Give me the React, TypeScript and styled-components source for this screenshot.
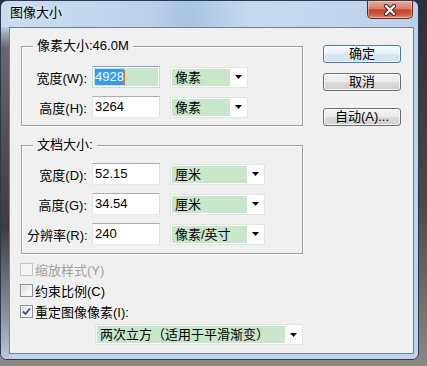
import styled, { createGlobalStyle } from "styled-components";

const GlobalStyle = createGlobalStyle`
  html, body {
    margin: 0;
    padding: 0;
  }
  body {
    width: 427px;
    height: 366px;
    overflow: hidden;
    background: linear-gradient(180deg, #2b3038 0%, #4b4846 55%, #8c8884 100%);
    font-family: "Liberation Sans", "Noto Sans CJK SC", sans-serif;
    font-size: 13px;
    color: #000;
  }
`;

const Window = styled.div`
  width: 419px;
  height: 360px;
  box-sizing: border-box;
  border: 1px solid #2c3a4c;
  border-radius: 7px;
  overflow: hidden;
  display: flex;
  flex-direction: column;
  background: linear-gradient(
    90deg,
    #cbdcef 0%,
    #bcd2ea 35%,
    #a8c3e1 45%,
    #c6daee 60%,
    #bad1ea 100%
  );
`;

const TitleBar = styled.div`
  height: 26px;
  display: flex;
  align-items: flex-start;
  padding: 0 5px 0 9px;
`;

const Title = styled.div`
  flex: 1;
  margin-top: 4px;
  line-height: 16px;
  text-shadow: 0 0 6px rgba(255, 255, 255, 0.9);
`;

const CloseButton = styled.div`
  width: 46px;
  height: 18px;
  box-sizing: border-box;
  border: 1px solid #6e2519;
  border-top: none;
  border-radius: 0 0 5px 5px;
  background: linear-gradient(
    #eaa99b 0%,
    #d9806d 45%,
    #c3442c 52%,
    #cd5b41 80%,
    #e48c70 100%
  );
  box-shadow: inset 0 0 0 1px rgba(255, 255, 255, 0.35);
  display: flex;
  align-items: center;
  justify-content: center;
`;

const Frame = styled.div`
  flex: 1;
  display: flex;
  padding: 0 4px 5px 8px;
  background: linear-gradient(
        180deg,
        #b9cde3 0px,
        #6a6670 20px,
        #3e3a3d 60%,
        #8d96a3 88%,
        #b8c8da 100%
      )
      left / 8px 100% no-repeat,
    #bfd3e8;
`;

const Client = styled.div`
  flex: 1;
  border: 1px solid #6d8297;
  background: #f0f0f0;
  display: grid;
  grid-template-columns: 282px 78px;
  column-gap: 20px;
  align-content: start;
  padding: 10px 0 0 11px;
`;

const LeftCol = styled.div`
  display: flex;
  flex-direction: column;
`;

const GroupBox = styled.fieldset<{ $top: number; $bottom: number; $gap?: number }>`
  margin: ${(p) => p.$gap ?? 0}px 0 0 0;
  padding: ${(p) => p.$top}px 0 ${(p) => p.$bottom}px 5px;
  border: 1px solid #a0a0a0;
  box-shadow: 1px 1px 0 #fff, inset 1px 1px 0 #fff;
  min-width: 0;
`;

const Legend = styled.legend`
  margin-left: 6px;
  padding: 0 4px;
  line-height: 16px;
  background: #f0f0f0;
`;

const Row = styled.div`
  display: flex;
  align-items: center;
  height: 22px;
  & + & {
    margin-top: 8px;
  }
`;

const Label = styled.span`
  width: 60px;
  margin-right: 5px;
  text-align: right;
  white-space: nowrap;
`;

const Field = styled.div<{ $active?: boolean }>`
  width: 68px;
  height: 22px;
  box-sizing: border-box;
  border: 1px solid;
  border-color: ${(p) =>
    p.$active ? "#7da2ce #c5daed #c5daed #c5daed" : "#abadb3 #dbdfe6 #e3e9ef #e2e3ea"};
  background: #fff;
  padding: 1px;
  display: flex;
`;

const FieldInner = styled.div<{ $active?: boolean }>`
  flex: 1;
  display: flex;
  align-items: center;
  padding-left: 1px;
  background: ${(p) => (p.$active ? "#c8e6c9" : "#fff")};
  line-height: 16px;
`;

const Selection = styled.span`
  background: #3399ff;
  color: #fff;
`;

const Caret = styled.span`
  width: 1px;
  height: 15px;
  background: #c77a2a;
`;

const Select = styled.div<{ $w: number; $indent?: number }>`
  width: ${(p) => p.$w}px;
  height: 21px;
  box-sizing: border-box;
  margin-left: ${(p) => p.$indent ?? 10}px;
  border: 1px solid #e4e4e4;
  background: #fff;
  padding: 1px;
  display: flex;
`;

const SelectText = styled.div`
  flex: 1;
  background: #c8e6c9;
  padding-left: 3px;
  line-height: 17px;
  white-space: nowrap;
  overflow: hidden;
`;

const Arrow = styled.div`
  width: 16px;
  display: flex;
  align-items: center;
  justify-content: center;
`;

const CheckList = styled.div`
  margin-top: 5px;
  display: flex;
  flex-direction: column;
`;

const CheckRow = styled.div<{ $disabled?: boolean }>`
  height: 21px;
  margin-left: -1px;
  display: flex;
  align-items: center;
  color: ${(p) => (p.$disabled ? "#a0a0a0" : "#000")};
`;

const Box = styled.span<{ $disabled?: boolean }>`
  width: 13px;
  height: 13px;
  box-sizing: border-box;
  margin-right: 2px;
  border: 1px solid ${(p) => (p.$disabled ? "#c6c6c6" : "#8e8f8f")};
  background: ${(p) =>
    p.$disabled ? "#f4f4f4" : "linear-gradient(135deg, #d6d8db 0%, #f4f4f4 60%, #fbfbfb 100%)"};
  box-shadow: inset 0 0 0 1px ${(p) => (p.$disabled ? "#f7f7f7" : "#f4f4f4")};
  display: flex;
  align-items: center;
  justify-content: center;
`;

const ResampleRow = styled.div`
  margin-top: 2px;
  display: flex;
`;

const ButtonCol = styled.div`
  display: flex;
  flex-direction: column;
  padding-top: 7px;
`;

const Button = styled.button<{ $primary?: boolean; $gap?: number }>`
  width: 78px;
  height: 18px;
  box-sizing: border-box;
  margin: ${(p) => p.$gap ?? 0}px 0 0 0;
  padding: 0;
  font: inherit;
  line-height: 16px;
  color: #000;
  border: 1px solid ${(p) => (p.$primary ? "#3c7fb1" : "#707070")};
  border-radius: 3px;
  background: ${(p) =>
    p.$primary
      ? "linear-gradient(#f6fafd, #e8f1f9 50%, #dae8f4 50%, #d0e2f1)"
      : "linear-gradient(#f2f2f2, #ebebeb 50%, #dddddd 50%, #cfcfcf)"};
  box-shadow: inset 0 0 0 1px rgba(255, 255, 255, 0.75);
`;

const DownArrow = () => (
  <svg width="7" height="4" viewBox="0 0 7 4">
    <path d="M0 0 H7 L3.5 4 Z" fill="#000" />
  </svg>
);

const CloseX = () => (
  <svg width="14" height="12" viewBox="0 0 14 12">
    <path d="M3 2 L11 10 M11 2 L3 10" stroke="#4a1a12" strokeWidth="4.2" strokeLinecap="round" />
    <path d="M3 2 L11 10 M11 2 L3 10" stroke="#fff" strokeWidth="2.4" strokeLinecap="round" />
  </svg>
);

const Tick = () => (
  <svg width="9" height="9" viewBox="0 0 9 9">
    <path d="M1 4.5 L3.5 7 L8 1.5" stroke="#3e4c7e" strokeWidth="1.8" fill="none" />
  </svg>
);

function Dropdown({ w, text, indent }: { w: number; text: string; indent?: number }) {
  return (
    <Select $w={w} $indent={indent}>
      <SelectText>{text}</SelectText>
      <Arrow>
        <DownArrow />
      </Arrow>
    </Select>
  );
}

function Check({ label, checked, disabled }: { label: string; checked?: boolean; disabled?: boolean }) {
  return (
    <CheckRow $disabled={disabled}>
      <Box $disabled={disabled}>{checked && <Tick />}</Box>
      {label}
    </CheckRow>
  );
}

export default function App() {
  return (
    <>
      <GlobalStyle />
      <Window>
        <TitleBar>
          <Title>图像大小</Title>
          <CloseButton>
            <CloseX />
          </CloseButton>
        </TitleBar>
        <Frame>
          <Client>
            <LeftCol>
              <GroupBox $top={12} $bottom={7}>
                <Legend>像素大小:46.0M</Legend>
                <Row>
                  <Label>宽度(W):</Label>
                  <Field $active>
                    <FieldInner $active>
                      <Selection>4928</Selection>
                      <Caret />
                    </FieldInner>
                  </Field>
                  <Dropdown w={78} text="像素" />
                </Row>
                <Row>
                  <Label>高度(H):</Label>
                  <Field>
                    <FieldInner>3264</FieldInner>
                  </Field>
                  <Dropdown w={78} text="像素" />
                </Row>
              </GroupBox>
              <GroupBox $top={10} $bottom={8} $gap={11}>
                <Legend>文档大小:</Legend>
                <Row>
                  <Label>宽度(D):</Label>
                  <Field>
                    <FieldInner>52.15</FieldInner>
                  </Field>
                  <Dropdown w={95} text="厘米" />
                </Row>
                <Row>
                  <Label>高度(G):</Label>
                  <Field>
                    <FieldInner>34.54</FieldInner>
                  </Field>
                  <Dropdown w={95} text="厘米" />
                </Row>
                <Row>
                  <Label>分辨率(R):</Label>
                  <Field>
                    <FieldInner>240</FieldInner>
                  </Field>
                  <Dropdown w={95} text="像素/英寸" />
                </Row>
              </GroupBox>
              <CheckList>
                <Check label="缩放样式(Y)" disabled />
                <Check label="约束比例(C)" />
                <Check label="重定图像像素(I):" checked />
              </CheckList>
              <ResampleRow>
                <Dropdown w={210} indent={74} text="两次立方（适用于平滑渐变）" />
              </ResampleRow>
            </LeftCol>
            <ButtonCol>
              <Button $primary>确定</Button>
              <Button $gap={10}>取消</Button>
              <Button $gap={17}>自动(A)...</Button>
            </ButtonCol>
          </Client>
        </Frame>
      </Window>
    </>
  );
}
